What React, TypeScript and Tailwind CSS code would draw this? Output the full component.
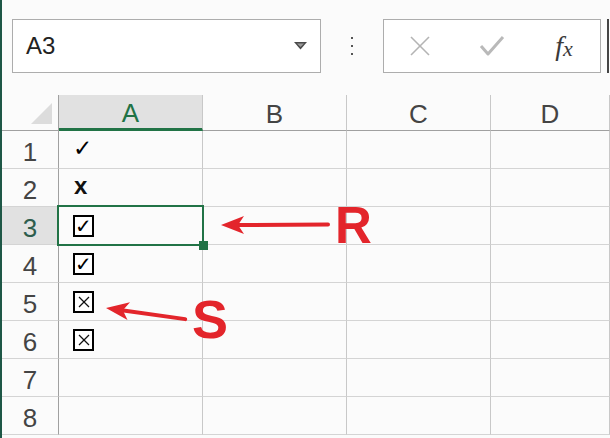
import React from "react";

function CheckBox({ kind }: { kind: "check" | "cross" }) {
  return (
    <span className="inline-flex w-[21px] h-[22px] border-2 border-black items-center justify-center bg-white">
      {kind === "check" ? (
        <span className="text-[20px] leading-none text-black font-['DejaVu_Sans',sans-serif] mt-[1px]">✓</span>
      ) : (
        <svg width="14" height="14" viewBox="0 0 14 14">
          <line x1="2" y1="2" x2="12" y2="12" stroke="#111" strokeWidth="1.2" />
          <line x1="12" y1="2" x2="2" y2="12" stroke="#111" strokeWidth="1.2" />
        </svg>
      )}
    </span>
  );
}

function CellContent({ row }: { row: number }) {
  if (row === 1)
    return <span className="text-[23px] leading-none font-['DejaVu_Sans',sans-serif] text-black -mt-[2px]">✓</span>;
  if (row === 2)
    return <span className="text-[24px] leading-none font-semibold text-[#111] -mt-[4px] ml-[1px]">x</span>;
  if (row === 3 || row === 4) return <CheckBox kind="check" />;
  if (row === 5 || row === 6) return <CheckBox kind="cross" />;
  return null;
}

export default function App() {
  const rows = [1, 2, 3, 4, 5, 6, 7, 8];
  const cols = ["A", "B", "C", "D"];
  return (
    <div className="relative w-[610px] h-[438px] overflow-hidden bg-[#fbfbfb] flex font-['Liberation_Sans',Arial,sans-serif]">
      <div className="w-[2px] h-full bg-[#1e5746] shrink-0" />
      <div className="flex-1 flex flex-col">
        {/* toolbar */}
        <div className="h-[95px] shrink-0 pt-[19px] flex items-start">
          <div className="h-[54px] flex items-stretch ml-[10px]">
            <div className="w-[309px] border border-[#adadad] bg-white flex items-center pl-[13px] pr-[13px]">
              <span className="text-[24px] text-[#222] leading-none flex-1">A3</span>
              <svg width="13" height="8" viewBox="0 0 13 8">
                <polygon points="0,0 13,0 6.5,7.5" fill="#4a4a4a" />
                <polygon points="3,1.5 10,1.5 6.5,5" fill="#9a9a9a" />
              </svg>
            </div>
            <div className="w-[62px] flex flex-col items-center justify-center gap-[6px]">
              <span className="w-[2px] h-[2px] bg-[#555]" />
              <span className="w-[2px] h-[2px] bg-[#555]" />
              <span className="w-[2px] h-[2px] bg-[#555]" />
            </div>
            <div className="w-[218px] border border-[#adadad] bg-white flex items-center">
              <div className="w-[72px] flex justify-center">
                <svg width="22" height="20" viewBox="0 0 22 20">
                  <line x1="2" y1="1" x2="20" y2="19" stroke="#b4b4b4" strokeWidth="1.6" />
                  <line x1="20" y1="1" x2="2" y2="19" stroke="#b4b4b4" strokeWidth="1.6" />
                </svg>
              </div>
              <div className="w-[72px] flex justify-center">
                <svg width="26" height="20" viewBox="0 0 26 20">
                  <polyline points="2,10 9,18 24,1" fill="none" stroke="#b9b9b9" strokeWidth="3" strokeLinejoin="round" />
                </svg>
              </div>
              <div className="w-[72px] flex justify-center items-center font-['Liberation_Serif',serif] italic text-[#3a3a3a]">
                <span className="text-[28px] leading-none">f</span>
                <span className="text-[22px] leading-none mt-[5px]">x</span>
              </div>
            </div>
            <div className="ml-[6px] w-[2px] bg-[#444]" />
          </div>
        </div>

        {/* sheet */}
        <div className="grid shrink-0 grid-cols-[57px_144px_144px_144px_1fr] grid-rows-[36px_repeat(8,38px)]">
          {/* corner */}
          <div className="border-r border-r-[#a0a0a0] border-b border-b-[#a0a0a0] flex items-end justify-end pr-[6px] pb-[6px] bg-[#fbfbfb]">
            <svg width="21" height="21" viewBox="0 0 21 21">
              <polygon points="21,0 21,21 0,21" fill="#dcdcdc" />
            </svg>
          </div>
          {cols.map((c) =>
            c === "A" ? (
              <div
                key={c}
                className="bg-[#e1e1e1] border-r border-r-[#c8c8c8] border-b-[3px] border-b-[#217346] flex items-center justify-center text-[26px] leading-none text-[#217346] pt-[2px]"
              >
                {c}
              </div>
            ) : (
              <div
                key={c}
                className="border-r border-r-[#c8c8c8] border-b border-b-[#a0a0a0] flex items-center justify-center text-[26px] leading-none text-[#444] pt-[2px]"
              >
                {c}
              </div>
            )
          )}
          {rows.map((r) => (
            <React.Fragment key={r}>
              <div
                className={
                  "border-r border-r-[#a0a0a0] border-b border-b-[#d4d4d4] flex items-center justify-center text-[26px] leading-none pt-[4px] " +
                  (r === 3 ? "bg-[#e1e1e1] text-[#2e5d4d]" : "text-[#444]")
                }
              >
                {r}
              </div>
              {cols.map((c) => (
                <div
                  key={c}
                  className="relative border-r border-r-[#c8c8c8] border-b border-b-[#d4d4d4] flex items-center pl-[14px]"
                >
                  {c === "A" ? <CellContent row={r} /> : null}
                  {c === "A" && r === 3 ? (
                    <>
                      <div className="absolute z-10 left-[-2px] top-[-2px] w-[147px] h-[41px] border-2 border-[#217346] pointer-events-none" />
                      <div className="absolute z-20 left-[140px] top-[34px] w-[9px] h-[9px] bg-[#217346]" />
                    </>
                  ) : null}
                </div>
              ))}
            </React.Fragment>
          ))}
        </div>
      </div>

      {/* annotation overlays */}
      <svg className="absolute z-30 left-0 top-0 pointer-events-none" width="610" height="438" viewBox="0 0 610 438">
        <line x1="328" y1="224.5" x2="236" y2="225" stroke="#e3252b" strokeWidth="4" strokeLinecap="round" />
        <polygon points="221,225 244,216 238,225 244,234" fill="#e3252b" />
        <g transform="rotate(8 106 308)">
          <line x1="120" y1="308" x2="186" y2="308" stroke="#e3252b" strokeWidth="4" strokeLinecap="round" />
          <polygon points="106,308 129,299 123,308 129,317" fill="#e3252b" />
        </g>
      </svg>
      <span className="absolute z-30 left-[335px] top-[200px] text-[51px] leading-none font-bold text-[#e3252b]">R</span>
      <span className="absolute z-30 left-[192px] top-[292px] text-[54px] leading-none font-bold text-[#e3252b]">S</span>
    </div>
  );
}
